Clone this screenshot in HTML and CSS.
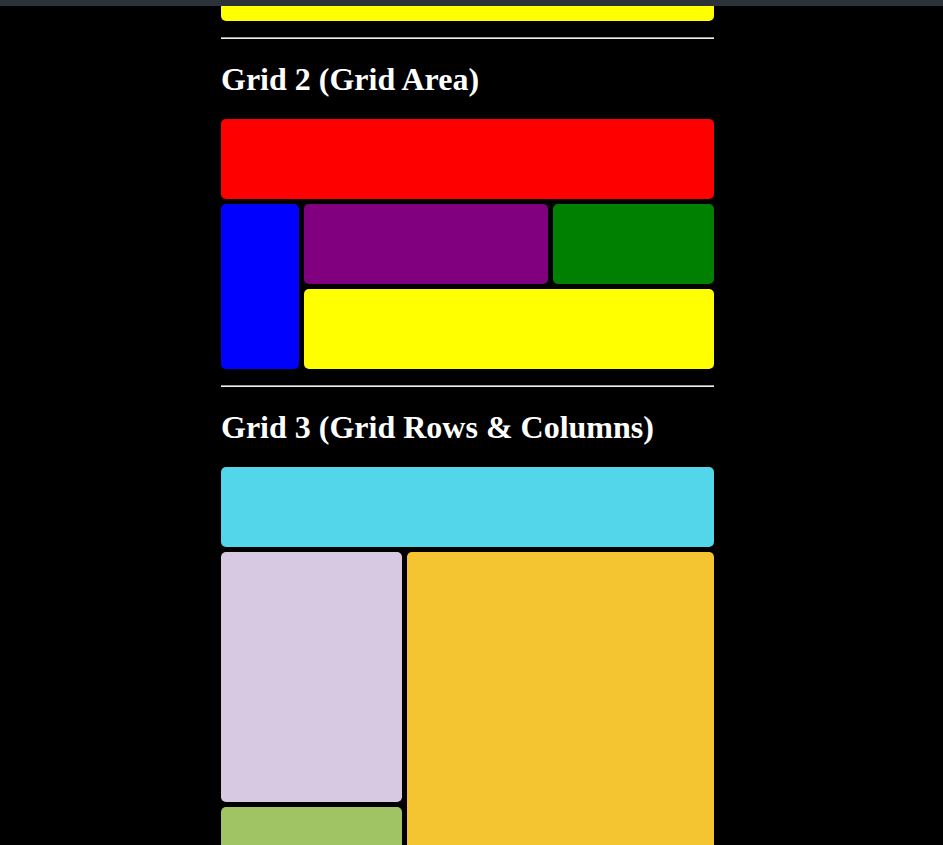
FILE: index.html
```html
<!DOCTYPE html>
<html>
<head>
<meta charset="utf-8">
<link rel="stylesheet" href="styles.css">
</head>
<body>
<div class="topbar"></div>
<main class="page">
  <div class="grid1-tail"></div>
  <hr class="rule">
  <h1 class="title">Grid 2 (Grid Area)</h1>
  <div class="grid2">
    <div class="box header"></div>
    <div class="box side"></div>
    <div class="box main"></div>
    <div class="box aside"></div>
    <div class="box footer"></div>
  </div>
  <hr class="rule">
  <h1 class="title">Grid 3 (Grid Rows &amp; Columns)</h1>
  <div class="grid3">
    <div class="box c1"></div>
    <div class="box c2"></div>
    <div class="box c3"></div>
    <div class="box c4"></div>
  </div>
</main>
</body>
</html>
```
FILE: styles.css
```css
html, body {
  margin: 0;
  padding: 0;
  background: #000;
  height: 845px;
  overflow: hidden;
}
body {
  font-family: "Liberation Serif", "Times New Roman", serif;
  color: #fff;
}
.topbar {
  height: 6px;
  background: #2b3338;
}
.page {
  width: 493px;
  margin-left: 221px;
}
.grid1-tail {
  height: 15px;
  margin-top: 0;
  background: #ffff00;
  border-radius: 0 0 5px 5px;
}
.rule {
  margin: 16px 0;
  border: none;
  border-top: 1px solid #9a9a9a;
  border-bottom: 1px solid #eeeeee;
  height: 0;
}
.title {
  font-size: 32px;
  font-weight: bold;
  margin: 22px 0 21px;
  line-height: 37px;
}
.box {
  border-radius: 5px;
}
.grid2 {
  display: grid;
  grid-template-columns: 78px 244px 1fr;
  grid-template-rows: 80px 80px 80px;
  gap: 5px;
  grid-template-areas:
    "header header header"
    "side main aside"
    "side footer footer";
}
.header { grid-area: header; background: #ff0000; }
.side { grid-area: side; background: #0000ff; }
.main { grid-area: main; background: #800080; }
.aside { grid-area: aside; background: #008000; }
.footer { grid-area: footer; background: #ffff00; }

.grid3 {
  display: grid;
  grid-template-columns: 181px 1fr;
  grid-template-rows: 80px 250px 250px;
  gap: 5px;
}
.c1 { grid-column: 1 / 3; background: #54d6ea; }
.c2 { background: #d8c9e3; }
.c3 { grid-row: 2 / 4; grid-column: 2; background: #f4c531; }
.c4 { background: #a0c463; }
```
